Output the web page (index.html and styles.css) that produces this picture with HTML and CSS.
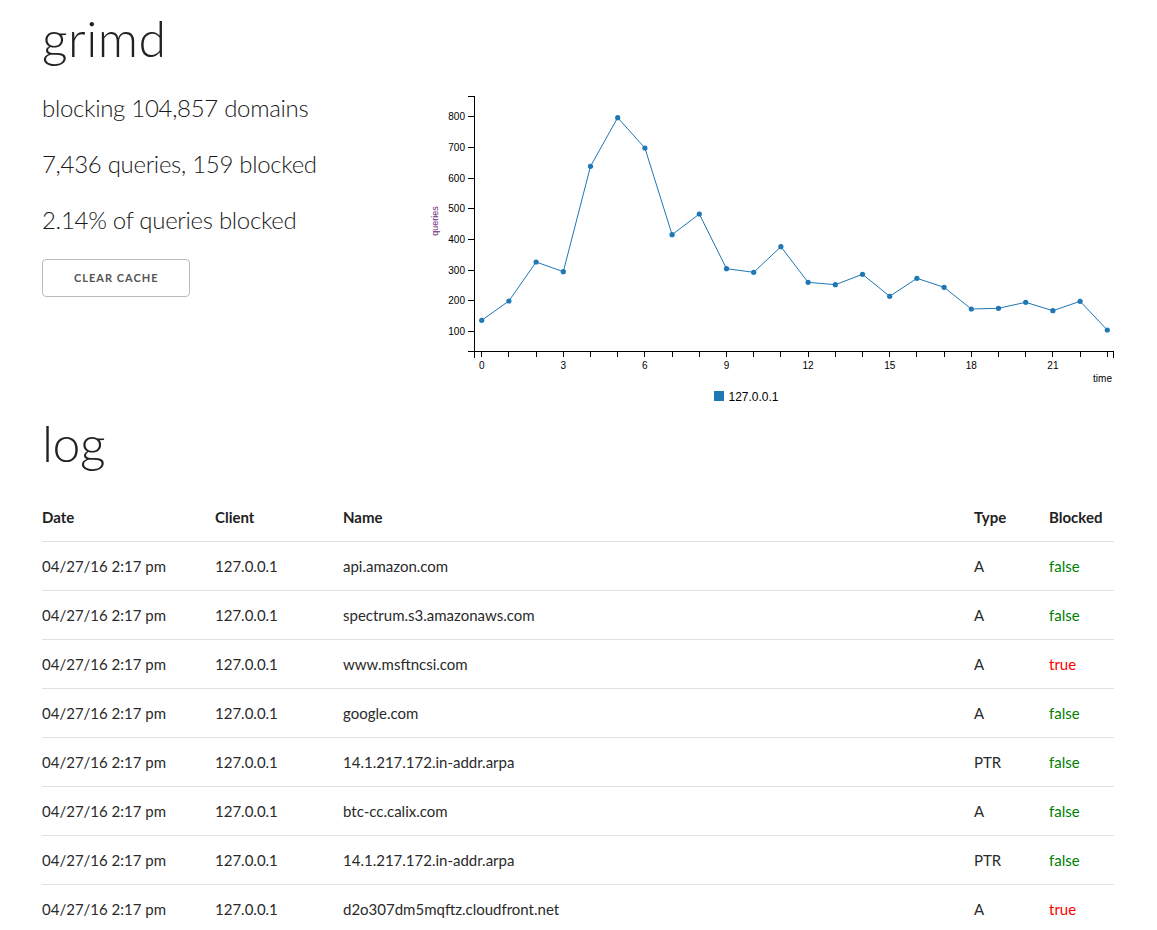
FILE: index.html
```html
<!DOCTYPE html>
<html>
<head>
<meta charset="utf-8">
<title>grimd</title>
<link rel="stylesheet" href="styles.css">
</head>
<body>
<div class="container">
  <h1 class="title">grimd</h1>
  <div class="top-row">
    <div class="stats">
      <p class="stat">blocking 104,857 domains</p>
      <p class="stat">7,436 queries, 159 blocked</p>
      <p class="stat">2.14% of queries blocked</p>
      <button class="button">Clear cache</button>
    </div>
    <svg class="chart" width="694" height="321" viewBox="0 0 694 321">
      <g transform="translate(-420,-92)">
        <g class="axis">
          <path class="domain" d="M468,96.5H474.5V351.5H468"/>
          <line x1="468" x2="474" y1="331.5" y2="331.5"/><text x="465" y="334.8">100</text>
          <line x1="468" x2="474" y1="300.5" y2="300.5"/><text x="465" y="304">200</text>
          <line x1="468" x2="474" y1="270.5" y2="270.5"/><text x="465" y="273.5">300</text>
          <line x1="468" x2="474" y1="239.5" y2="239.5"/><text x="465" y="242.8">400</text>
          <line x1="468" x2="474" y1="208.5" y2="208.5"/><text x="465" y="212">500</text>
          <line x1="468" x2="474" y1="178.5" y2="178.5"/><text x="465" y="181.5">600</text>
          <line x1="468" x2="474" y1="147.5" y2="147.5"/><text x="465" y="150.8">700</text>
          <line x1="468" x2="474" y1="116.5" y2="116.5"/><text x="465" y="120">800</text>
          <text class="ylabel" transform="translate(438,221) rotate(-90)">queries</text>
        </g>
        <g class="axis xaxis">
          <path class="domain" d="M474.5,357.5V351.5H1113.5V357.5"/>
          <line x1="481.7" x2="481.7" y1="351" y2="357"/>
          <line x1="508.9" x2="508.9" y1="351" y2="357"/>
          <line x1="536.1" x2="536.1" y1="351" y2="357"/>
          <line x1="563.3" x2="563.3" y1="351" y2="357"/>
          <line x1="590.5" x2="590.5" y1="351" y2="357"/>
          <line x1="617.7" x2="617.7" y1="351" y2="357"/>
          <line x1="644.9" x2="644.9" y1="351" y2="357"/>
          <line x1="672.1" x2="672.1" y1="351" y2="357"/>
          <line x1="699.3" x2="699.3" y1="351" y2="357"/>
          <line x1="726.5" x2="726.5" y1="351" y2="357"/>
          <line x1="753.7" x2="753.7" y1="351" y2="357"/>
          <line x1="780.9" x2="780.9" y1="351" y2="357"/>
          <line x1="808.1" x2="808.1" y1="351" y2="357"/>
          <line x1="835.3" x2="835.3" y1="351" y2="357"/>
          <line x1="862.5" x2="862.5" y1="351" y2="357"/>
          <line x1="889.7" x2="889.7" y1="351" y2="357"/>
          <line x1="916.9" x2="916.9" y1="351" y2="357"/>
          <line x1="944.1" x2="944.1" y1="351" y2="357"/>
          <line x1="971.3" x2="971.3" y1="351" y2="357"/>
          <line x1="998.5" x2="998.5" y1="351" y2="357"/>
          <line x1="1025.7" x2="1025.7" y1="351" y2="357"/>
          <line x1="1052.9" x2="1052.9" y1="351" y2="357"/>
          <line x1="1080.1" x2="1080.1" y1="351" y2="357"/>
          <line x1="1107.3" x2="1107.3" y1="351" y2="357"/>
          <text class="mid" x="481.7" y="368.5">0</text>
          <text class="mid" x="563.3" y="368.5">3</text>
          <text class="mid" x="644.9" y="368.5">6</text>
          <text class="mid" x="726.5" y="368.5">9</text>
          <text class="mid" x="808.1" y="368.5">12</text>
          <text class="mid" x="889.7" y="368.5">15</text>
          <text class="mid" x="971.3" y="368.5">18</text>
          <text class="mid" x="1052.9" y="368.5">21</text>
          <text x="1112" y="381.5">time</text>
        </g>
        <polyline class="series" points="481.7,320.3 508.9,301 536.1,262 563.3,271.7 590.5,166.3 617.7,117.7 644.9,148 672.1,234.7 699.3,214 726.5,268.7 753.7,272.3 780.9,246.7 808.1,282.3 835.3,284.7 862.5,274.3 889.7,296.3 916.9,278.3 944.1,287.3 971.3,309 998.5,308.3 1025.7,302.3 1052.9,310.7 1080.1,301.3 1107.3,330"/>
        <g class="dots">
          <circle cx="481.7" cy="320.3" r="2.6"/><circle cx="508.9" cy="301" r="2.6"/><circle cx="536.1" cy="262" r="2.6"/><circle cx="563.3" cy="271.7" r="2.6"/>
          <circle cx="590.5" cy="166.3" r="2.6"/><circle cx="617.7" cy="117.7" r="2.6"/><circle cx="644.9" cy="148" r="2.6"/><circle cx="672.1" cy="234.7" r="2.6"/>
          <circle cx="699.3" cy="214" r="2.6"/><circle cx="726.5" cy="268.7" r="2.6"/><circle cx="753.7" cy="272.3" r="2.6"/><circle cx="780.9" cy="246.7" r="2.6"/>
          <circle cx="808.1" cy="282.3" r="2.6"/><circle cx="835.3" cy="284.7" r="2.6"/><circle cx="862.5" cy="274.3" r="2.6"/><circle cx="889.7" cy="296.3" r="2.6"/>
          <circle cx="916.9" cy="278.3" r="2.6"/><circle cx="944.1" cy="287.3" r="2.6"/><circle cx="971.3" cy="309" r="2.6"/><circle cx="998.5" cy="308.3" r="2.6"/>
          <circle cx="1025.7" cy="302.3" r="2.6"/><circle cx="1052.9" cy="310.7" r="2.6"/><circle cx="1080.1" cy="301.3" r="2.6"/><circle cx="1107.3" cy="330" r="2.6"/>
        </g>
        <g class="legend">
          <rect x="714" y="391" width="10" height="10"/>
          <text x="728.5" y="400.5">127.0.0.1</text>
        </g>
      </g>
    </svg>
  </div>

  <h1 class="title log-title">log</h1>
  <table class="log">
    <thead>
      <tr><th class="c-date">Date</th><th class="c-client">Client</th><th class="c-name">Name</th><th class="c-type">Type</th><th class="c-blocked">Blocked</th></tr>
    </thead>
    <tbody>
      <tr><td>04/27/16 2:17 pm</td><td>127.0.0.1</td><td>api.amazon.com</td><td>A</td><td class="no">false</td></tr>
      <tr><td>04/27/16 2:17 pm</td><td>127.0.0.1</td><td>spectrum.s3.amazonaws.com</td><td>A</td><td class="no">false</td></tr>
      <tr><td>04/27/16 2:17 pm</td><td>127.0.0.1</td><td>www.msftncsi.com</td><td>A</td><td class="yes">true</td></tr>
      <tr><td>04/27/16 2:17 pm</td><td>127.0.0.1</td><td>google.com</td><td>A</td><td class="no">false</td></tr>
      <tr><td>04/27/16 2:17 pm</td><td>127.0.0.1</td><td>14.1.217.172.in-addr.arpa</td><td>PTR</td><td class="no">false</td></tr>
      <tr><td>04/27/16 2:17 pm</td><td>127.0.0.1</td><td>btc-cc.calix.com</td><td>A</td><td class="no">false</td></tr>
      <tr><td>04/27/16 2:17 pm</td><td>127.0.0.1</td><td>14.1.217.172.in-addr.arpa</td><td>PTR</td><td class="no">false</td></tr>
      <tr><td>04/27/16 2:17 pm</td><td>127.0.0.1</td><td>d2o307dm5mqftz.cloudfront.net</td><td>A</td><td class="yes">true</td></tr>
    </tbody>
  </table>
</div>
</body>
</html>
```
FILE: styles.css
```css
* { box-sizing: border-box; }

html, body {
  margin: 0;
  padding: 0;
  background: #fff;
}

body {
  font-family: "Lato", "Open Sans", sans-serif;
  font-size: 15px;
  line-height: 1.6;
  color: #222;
  font-weight: 400;
}

.container {
  padding: 8px 43px 0 42px;
}

.title {
  font-size: 50px;
  line-height: 60px;
  font-weight: 300;
  letter-spacing: 0.5px;
  margin: 0 0 24px 0;
  color: #222;
}

.top-row {
  display: flex;
  align-items: flex-start;
}

.stats {
  flex: 1;
  display: flex;
  flex-direction: column;
  align-items: flex-start;
}

.stat {
  font-size: 24px;
  line-height: 32px;
  font-weight: 300;
  letter-spacing: -0.3px;
  margin: 0 0 24px 0;
  color: #1a1a1a;
}

.stat:last-of-type { margin-bottom: 23px; }

.button {
  height: 38px;
  padding: 0 31px;
  font-family: "Lato", "Open Sans", sans-serif;
  font-size: 11px;
  font-weight: 700;
  line-height: 36px;
  letter-spacing: 1px;
  text-transform: uppercase;
  color: #555;
  background: transparent;
  border: 1px solid #bbb;
  border-radius: 4px;
  cursor: pointer;
}

.chart {
  display: block;
  flex: none;
  font-family: "Liberation Sans", Arial, sans-serif;
}

.axis path.domain,
.axis line {
  fill: none;
  stroke: #000;
  stroke-width: 1;
  shape-rendering: crispEdges;
}

.axis text {
  font-size: 10px;
  fill: #000;
  text-anchor: end;
}

.axis text.mid { text-anchor: middle; }

.axis text.ylabel {
  font-size: 9px;
  fill: #6b1e7a;
  text-anchor: middle;
}

.series {
  fill: none;
  stroke: #1f77b4;
  stroke-width: 1;
}

.dots circle { fill: #1f77b4; }

.legend rect { fill: #1f77b4; }
.legend text { font-size: 12px; fill: #000; }

.log-title {
  margin: 0 0 20px 0;
  letter-spacing: -0.5px;
}

.log {
  width: 100%;
  border-collapse: collapse;
  border-spacing: 0;
  table-layout: fixed;
}

.log th,
.log td {
  padding: 12px 15px;
  text-align: left;
  border-bottom: 1px solid #e1e1e1;
  line-height: 24px;
  font-size: 15px;
  white-space: nowrap;
}

.log th { font-weight: 700; color: #222; }
.log td { font-weight: 400; color: #2a2a2a; }

.log th:first-child,
.log td:first-child { padding-left: 0; }

.log th:last-child,
.log td:last-child { padding-right: 0; }

.c-date { width: 158px; }
.c-client { width: 128px; }
.c-name { width: 631px; }
.c-type { width: 75px; }
.c-blocked { width: 80px; }

.log td.no { color: green; }
.log td.yes { color: red; }
```
